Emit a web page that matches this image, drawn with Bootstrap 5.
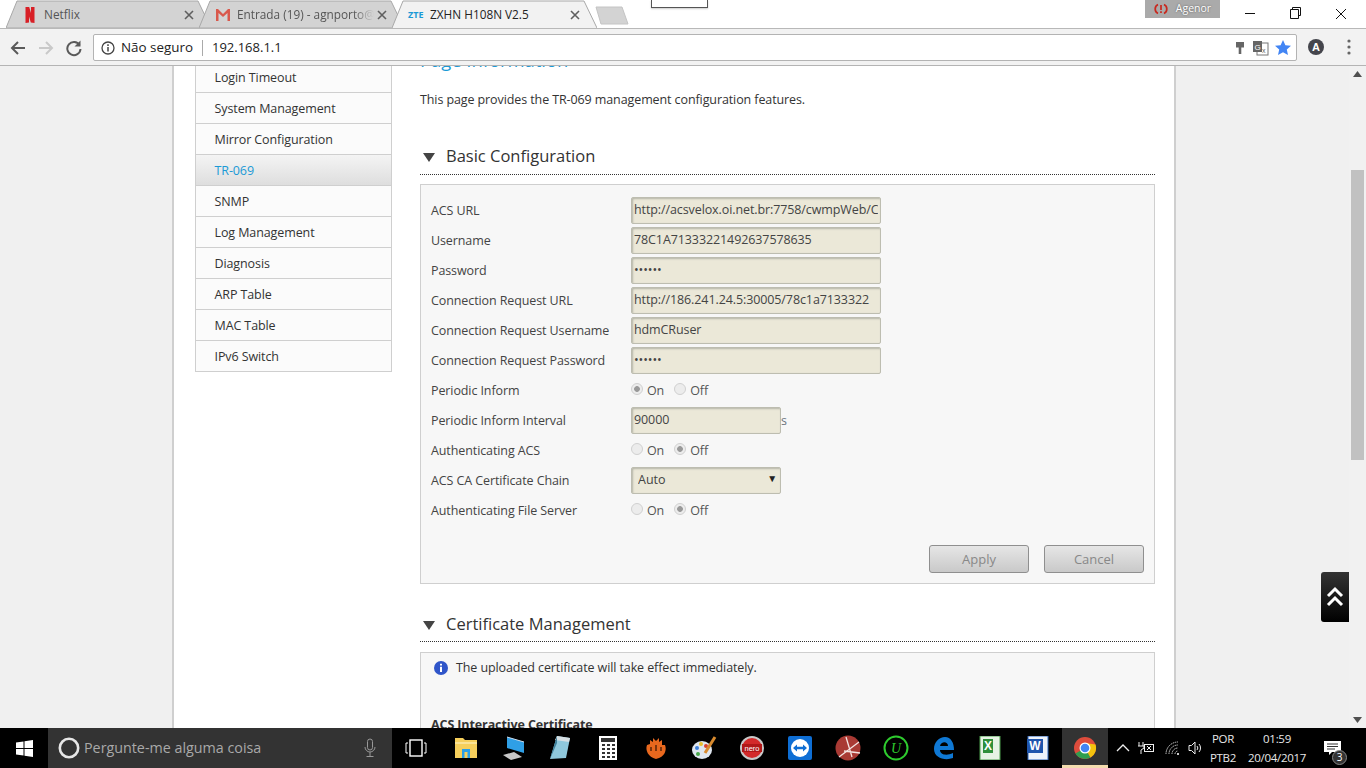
<!DOCTYPE html>
<html lang="pt">
<head>
<meta charset="utf-8">
<title>ZXHN H108N V2.5</title>
<link href="https://cdn.jsdelivr.net/npm/bootstrap@5.3.0/dist/css/bootstrap.min.css" rel="stylesheet">
<style>
html,body{height:100%;overflow:hidden}
body{width:1366px;height:768px;font-family:"Open Sans","Noto Sans",sans-serif;font-size:13px;color:#333;background:#fff;position:relative}
.tabstrip{height:28px;padding-left:6px;background:#fff;position:relative;flex:none}
.ctab{width:205px;height:28px;margin-right:-12px;position:relative;font-size:11.8px;color:#555;padding-left:16px;padding-top:1px;flex:none}
.ctab.on{color:#222;z-index:2}
.tabshape{position:absolute;left:0;top:0;z-index:0}
.ctab>*:not(.tabshape){position:relative;z-index:1}
.favslot{width:16px;height:16px;flex:none;margin-right:6px}
.tabtitle{width:137px;white-space:nowrap;overflow:hidden;flex:none}
.fade-end{-webkit-mask-image:linear-gradient(90deg,#000 85%,transparent);mask-image:linear-gradient(90deg,#000 85%,transparent)}
.tabx{margin-left:3px;flex:none}
.newtab{margin-left:10px;margin-top:6px;flex:none}
.winctl{position:absolute;right:0;top:0;height:24px}
.agenor{position:absolute;left:1145px;top:0;width:75px;height:18px;background:#aaa;color:#fff;font-size:10.5px;text-shadow:0 0 2px #555}
.topbox{position:absolute;left:651px;top:0;width:57px;height:8px;background:#fff;border:1px solid #555;border-top:0;box-shadow:0 1px 2px #ccc}
.toolbar{height:38px;background:#f2f2f2;border-top:1px solid #b8b8b8;border-bottom:1px solid #b4b4b4;flex:none;padding-left:9px}
.navbtn{width:28px;flex:none}
.addrbox{position:absolute;left:93px;top:34px;width:1204px;height:27px;background:#fff;border:1px solid #b3b3b3;border-radius:2px;font-size:13px;color:#222;padding:0 5px 0 7px}
.addrinfo{margin-right:6px;flex:none}
.addrwarn{font-size:13.4px}
.addrsep{width:1px;height:16px;background:#aaa;margin:0 9px}
.addricons{gap:6px}
.pagearea{flex:1 1 auto;min-height:0;background:#f0f0f0;overflow:hidden}
.sheet{margin-left:172px;width:1004px;height:100%;background:#fff;border-left:2px solid #cfcfcf;border-right:2px solid #cfcfcf;flex:none;overflow:hidden;font-size:12.5px;letter-spacing:-.1px}
.scrolled{margin-top:-16px;padding-left:21px}
.sidemenu{width:197px;margin-top:11px;border:1px solid #cfcfcf;flex:none;background:#fbfbfb}
.sideitem{height:31px;line-height:32px;padding-left:18.5px;border-bottom:1px solid #cfcfcf;color:#333}
.sideitem:last-child{border-bottom:0;height:30px}
.sideitem.cur{background:linear-gradient(#f4f4f4,#dedede);color:#1b9ad6}
.mainpane{width:735px;margin-left:28px;flex:none}
.pagehead{height:20px;line-height:20px;font-size:18.4px;color:#1b9ad6;margin:0;letter-spacing:0}
.pagedesc{margin:20px 0 0;line-height:20px;height:20px}
.sectitle{margin-top:29px;height:36px;border-bottom:1px dotted #333;font-size:16.5px;padding:0 0 1px 3px;color:#333;font-weight:400;letter-spacing:0}
.tri{width:0;height:0;border-left:6px solid transparent;border-right:6px solid transparent;border-top:9px solid #444;margin-right:11px;margin-top:3px}
.formbox{margin-top:9px;border:1px solid #cfcfcf;background:#f7f7f7;padding:11px 10px 10px;height:400px}
.frow{height:30px}
.flabel{width:200px;flex:none;color:#444}
.finput{width:250px;height:27px;padding:0 2px 1px;margin:-1px 0 1px;border:1px solid #bdbdb0;border-radius:2px;background:#ebe8d8;color:#444;font-size:12.5px;letter-spacing:-.1px;box-shadow:inset 1px 1px 2px #b5b5a8;font-family:inherit}
.finput:focus{background:#ebe8d8;box-shadow:inset 1px 1px 2px #b5b5a8;border-color:#bdbdb0}
.finput.short{width:150px}
.selwrap{position:relative;width:150px;margin:-1px 0 1px}
.fselect{width:150px;height:27px;padding:0 6px;border:1px solid #bdbdb0;border-radius:2px;background:#ebe8d8;color:#444;font-size:12.5px;box-shadow:inset 1px 1px 2px #b5b5a8;background-image:none}
.selarrow{position:absolute;right:4px;top:4px;font-size:10px;color:#222;pointer-events:none}
.rad{width:12px;height:12px;border-radius:50%;background:#ececec;border:1px solid #d0d0d0;display:inline-block;margin-top:-4px;margin-right:4px}
.rad.sel{background:radial-gradient(circle,#999 0 2.5px,#ececec 3.2px)}
.radopt{margin-right:10px;color:#555}
.btnrow{margin-top:19px}
.gbtn{width:100px;height:28px;padding:1px 0 0;font-size:13px;color:#888;background:linear-gradient(#e6e6e6,#c9c9c9);border:1px solid #8f8f8f;border-radius:3px;margin-left:15px}
.gbtn:disabled{color:#888;background:linear-gradient(#e6e6e6,#c9c9c9);border:1px solid #8f8f8f;opacity:1}
.sectitle.sec2{margin-top:22px;padding:1px 0 0 3px}
.notebox{margin-top:10px;border:1px solid #cfcfcf;border-bottom:0;background:#f7f7f7;padding:5px 10px 0 13px;height:120px}
.noteline{line-height:20px}
.certhd{margin-top:38px;margin-left:-3px;font-weight:700;color:#333}
.vscroll{width:17px;margin-left:auto;position:relative;background:#f1f1f1;flex:none}
.thumb{width:13px;height:290px;margin:93px 0 0 2px;background:#c1c1c1}
.sarrow{display:block;margin:5px 0 0 4px}
.sarrow.dn{position:absolute;bottom:5px;left:0;margin:0 0 0 4px}
.totop{position:absolute;left:1321px;top:572px;width:28px;height:50px;background:linear-gradient(#333,#000);border-radius:3px 0 0 3px;z-index:5}
.taskbar{height:40px;background:#000;color:#fff;flex:none;position:relative;z-index:6}
.startbtn{width:48px;flex:none}
.searchbx{width:344px;background:#333;color:#a9a9a9;font-size:14.3px;padding-left:10px;flex:none}
.tbslot{width:48px;height:40px;flex:none}
.tbslot.pull{margin-left:-2px}
.tbslot.act{width:46px;background:#333;border-bottom:3px solid #f3dcae;padding-top:3px}
.tray{font-size:12px;color:#eee;text-align:center}
.tslot{flex:none}
.tslot.wifi{margin-left:11px}
.traytxt{font-size:11.5px;letter-spacing:-.3px;line-height:19px;color:#e8e8e8;flex:none;text-align:center;white-space:nowrap}
.langbox{width:36px;margin-left:2px}
.clockbox{width:60px;margin-left:6px}
.notifybox{width:24px;height:36px;margin-left:17px;position:relative;flex:none}
.notifyicon{position:absolute;left:0;top:11px}
.notifynum{position:absolute;left:8px;top:20px;width:15px;height:15px;background:#333;border:1px solid #888;font-size:10px;color:#fff}
</style>
</head>
<body class="d-flex flex-column">

<div class="tabstrip d-flex align-items-start">
  <div class="ctab d-flex align-items-center">
    <svg class="tabshape" width="205" height="28"><path d="M0 28 L11 1 H192 L205 28Z" fill="#d3d3d3" stroke="#a8a8a8"/></svg>
    <svg class="favslot" viewBox="0 0 16 16"><path d="M3.5 0H7.2L9 6V0H12.5V16L8.8 15.4L7 9.5V15.4L3.5 16Z" fill="#d81f26"/></svg>
    <span class="tabtitle">Netflix</span>
    <svg class="tabx" width="10" height="10" viewBox="0 0 10 10"><path d="M1 1L9 9M9 1L1 9" stroke="#5f5f5f" stroke-width="1.6"/></svg>
  </div>
  <div class="ctab d-flex align-items-center">
    <svg class="tabshape" width="205" height="28"><path d="M0 28 L11 1 H192 L205 28Z" fill="#d3d3d3" stroke="#a8a8a8"/></svg>
    <svg class="favslot" viewBox="0 0 16 16"><path d="M1 2H3L8 7L13 2H15V14H12.5V6L8 10L3.5 6V14H1Z" fill="#d9584c"/></svg>
    <span class="tabtitle fade-end">Entrada (19) - agnporto@gmail</span>
    <svg class="tabx" width="10" height="10" viewBox="0 0 10 10"><path d="M1 1L9 9M9 1L1 9" stroke="#5f5f5f" stroke-width="1.6"/></svg>
  </div>
  <div class="ctab on d-flex align-items-center">
    <svg class="tabshape" width="205" height="29"><path d="M0 28 L11 1 H192 L205 28" fill="#f2f2f2" stroke="#a8a8a8"/></svg>
    <span class="favslot fw-bold d-flex align-items-center" style="color:#1b9ad6;font-size:9px">ZTE</span>
    <span class="tabtitle">ZXHN H108N V2.5</span>
    <svg class="tabx" width="10" height="10" viewBox="0 0 10 10"><path d="M1 1L9 9M9 1L1 9" stroke="#5f5f5f" stroke-width="1.6"/></svg>
  </div>
  <svg class="newtab" width="34" height="19"><path d="M1 1H27L33 18H6Z" fill="#d3d3d3" stroke="#c4c4c4"/></svg>
</div>
<div class="topbox"></div>
<div class="agenor d-flex align-items-center justify-content-center gap-2">
  <svg width="14" height="12" viewBox="0 0 14 12"><path d="M4 1.5A5 5 0 0 0 4 10.5M10 1.5A5 5 0 0 1 10 10.5" fill="none" stroke="#c8281e" stroke-width="1.7"/><path d="M7 2V7M7 8.3V10" stroke="#c8281e" stroke-width="1.7"/></svg>
  <span>Agenor</span>
</div>
<svg class="winctl" width="140" height="24" viewBox="1226 0 140 24"><path d="M1245 13.5H1255" stroke="#111"/><path d="M1290.5 11.5H1298.5V20.5H1290.5ZM1292.5 11V9.5H1300.5V17.5H1299" fill="none" stroke="#111" transform="translate(0 -2)"/><path d="M1336 9L1346 19M1346 9L1336 19" stroke="#111"/></svg>

<div class="toolbar d-flex align-items-center">
  <div class="navbtn"><svg width="18" height="16" viewBox="0 0 18 16"><path d="M16 8H3M9 2L3 8L9 14" fill="none" stroke="#5a5a5a" stroke-width="2"/></svg></div>
  <div class="navbtn"><svg width="18" height="16" viewBox="0 0 18 16"><path d="M2 8H15M9 2L15 8L9 14" fill="none" stroke="#c9c9c9" stroke-width="2"/></svg></div>
  <div class="navbtn"><svg width="18" height="18" viewBox="0 0 18 18"><path d="M14.5 6A6.6 6.6 0 1 0 15.5 10" fill="none" stroke="#5a5a5a" stroke-width="2"/><path d="M15.5 1.5V7.5H9.5Z" fill="#5a5a5a"/></svg></div>
</div>
<div class="addrbox d-flex align-items-center">
  <svg width="14" height="14" viewBox="0 0 14 14" class="addrinfo"><circle cx="7" cy="7" r="6" fill="none" stroke="#444" stroke-width="1.3"/><path d="M7 6V10.5M7 3.3V5" stroke="#444" stroke-width="1.5"/></svg>
  <span class="addrwarn">Não seguro</span><span class="addrsep"></span><span>192.168.1.1</span>
  <span class="ms-auto d-flex align-items-center addricons">
    <svg width="12" height="16" viewBox="0 0 12 16"><path d="M2 2H10V7.5H7.3V14H4.7V7.5H2Z" fill="#666"/></svg>
    <svg width="17" height="16" viewBox="0 0 17 16"><rect x="5" y="3" width="11" height="12" fill="#fff" stroke="#777"/><rect x="1" y="1" width="9" height="11" fill="#666"/><text x="2.5" y="9.5" font-size="8" fill="#fff" font-family="Liberation Sans">G</text><text x="10" y="13" font-size="7" fill="#666" font-family="Liberation Sans">x</text></svg>
    <svg width="16" height="15" viewBox="0 0 16 15"><path d="M8 0L10.4 5.2L16 5.8L11.8 9.5L13 15L8 12.2L3 15L4.2 9.5L0 5.8L5.6 5.2Z" fill="#4285f4"/></svg>
  </span>
</div>
<svg class="position-absolute" style="left:1306px;top:37px" width="50" height="20" viewBox="0 0 50 20"><circle cx="10" cy="10" r="8" fill="#44454c"/><text x="10" y="14" font-size="11" font-weight="700" text-anchor="middle" fill="#fff" font-family="Liberation Sans">A</text><circle cx="43" cy="4" r="1.6" fill="#666"/><circle cx="43" cy="10" r="1.6" fill="#666"/><circle cx="43" cy="16" r="1.6" fill="#666"/></svg>

<div class="pagearea d-flex">
  <div class="sheet">
    <div class="scrolled d-flex align-items-start">
      <div class="sidemenu">
        <div class="sideitem">Login Timeout</div>
        <div class="sideitem">System Management</div>
        <div class="sideitem">Mirror Configuration</div>
        <div class="sideitem cur">TR-069</div>
        <div class="sideitem">SNMP</div>
        <div class="sideitem">Log Management</div>
        <div class="sideitem">Diagnosis</div>
        <div class="sideitem">ARP Table</div>
        <div class="sideitem">MAC Table</div>
        <div class="sideitem">IPv6 Switch</div>
      </div>
      <div class="mainpane">
        <h1 class="pagehead">Page Information</h1>
        <p class="pagedesc">This page provides the TR-069 management configuration features.</p>
        <div class="sectitle d-flex align-items-center"><span class="tri"></span>Basic Configuration</div>
        <form class="formbox">
          <div class="frow d-flex align-items-center"><label class="flabel">ACS URL</label><input class="form-control finput" value="http://acsvelox.oi.net.br:7758/cwmpWeb/CPEMgt"></div>
          <div class="frow d-flex align-items-center"><label class="flabel">Username</label><input class="form-control finput" value="78C1A71333221492637578635"></div>
          <div class="frow d-flex align-items-center"><label class="flabel">Password</label><input class="form-control finput" type="password" value="xxxxxx"></div>
          <div class="frow d-flex align-items-center"><label class="flabel">Connection Request URL</label><input class="form-control finput" value="http://186.241.24.5:30005/78c1a7133322"></div>
          <div class="frow d-flex align-items-center"><label class="flabel">Connection Request Username</label><input class="form-control finput" value="hdmCRuser"></div>
          <div class="frow d-flex align-items-center"><label class="flabel">Connection Request Password</label><input class="form-control finput" type="password" value="xxxxxx"></div>
          <div class="frow d-flex align-items-center"><span class="flabel">Periodic Inform</span><span class="radopt d-flex align-items-center"><span class="rad sel"></span>On</span><span class="radopt d-flex align-items-center"><span class="rad"></span>Off</span></div>
          <div class="frow d-flex align-items-center"><label class="flabel">Periodic Inform Interval</label><input class="form-control finput short" value="90000"><span class="text-secondary">s</span></div>
          <div class="frow d-flex align-items-center"><span class="flabel">Authenticating ACS</span><span class="radopt d-flex align-items-center"><span class="rad"></span>On</span><span class="radopt d-flex align-items-center"><span class="rad sel"></span>Off</span></div>
          <div class="frow d-flex align-items-center"><label class="flabel">ACS CA Certificate Chain</label><span class="selwrap"><select class="form-select fselect"><option>Auto</option></select><span class="selarrow">▼</span></span></div>
          <div class="frow d-flex align-items-center"><span class="flabel">Authenticating File Server</span><span class="radopt d-flex align-items-center"><span class="rad"></span>On</span><span class="radopt d-flex align-items-center"><span class="rad sel"></span>Off</span></div>
          <div class="btnrow d-flex justify-content-end"><button type="button" class="btn gbtn" disabled>Apply</button><button type="button" class="btn gbtn" disabled>Cancel</button></div>
        </form>
        <div class="sectitle sec2 d-flex align-items-center"><span class="tri"></span>Certificate Management</div>
        <div class="notebox">
          <div class="noteline d-flex align-items-center gap-2"><svg width="14" height="14" viewBox="0 0 14 14"><circle cx="7" cy="7" r="7" fill="#2f55c9"/><path d="M7 5.8V11M7 2.8V4.5" stroke="#fff" stroke-width="2"/></svg><span>The uploaded certificate will take effect immediately.</span></div>
          <div class="certhd">ACS Interactive Certificate</div>
        </div>
      </div>
    </div>
  </div>
  <div class="vscroll">
    <svg class="sarrow" width="9" height="6" viewBox="0 0 9 6"><path d="M4.5 0L9 6H0Z" fill="#505050"/></svg>
    <div class="thumb"></div>
    <svg class="sarrow dn" width="9" height="6" viewBox="0 0 9 6"><path d="M0 0H9L4.5 6Z" fill="#505050"/></svg>
  </div>
</div>

<div class="totop d-flex align-items-center justify-content-center">
  <svg width="18" height="22" viewBox="0 0 18 22"><path d="M2 10L9 3L16 10M2 19L9 12L16 19" fill="none" stroke="#fff" stroke-width="3"/></svg>
</div>

<div class="taskbar d-flex align-items-stretch">
  <div class="startbtn d-flex align-items-center justify-content-center">
    <svg width="17" height="17" viewBox="0 0 17 17"><path d="M0 2.5L7.5 1.4V8H0ZM8.5 1.2L17 0V8H8.5ZM0 9H7.5V15.6L0 14.5ZM8.5 9H17V17L8.5 15.8Z" fill="#fff"/></svg>
  </div>
  <div class="searchbx d-flex align-items-center">
    <svg width="22" height="22" viewBox="0 0 22 22" class="me-1"><circle cx="11" cy="11" r="9.2" fill="none" stroke="#e6e6e6" stroke-width="2.6"/></svg>
    <span>Pergunte-me alguma coisa</span>
    <svg class="ms-auto me-3" width="12" height="20" viewBox="0 0 12 20"><rect x="3.5" y="1" width="5" height="11" rx="2.5" fill="none" stroke="#999"/><path d="M1 9A5 5 0 0 0 11 9M6 14V18M2.5 18.5H9.5" fill="none" stroke="#999"/></svg>
  </div>
  <div class="tbslot d-flex align-items-center justify-content-center"><svg width="22" height="18" viewBox="0 0 22 18"><rect x="5" y="1" width="12" height="16" fill="none" stroke="#fff" stroke-width="1.4"/><path d="M3 4H1V14H3M19 4H21V14H19" fill="none" stroke="#fff"/></svg></div>
  <div class="tbslot d-flex align-items-center justify-content-center ps-1"><svg width="24" height="22" viewBox="0 0 24 22"><path d="M1 1H9L11 3H23V21H1Z" fill="#f6cf5c"/><path d="M1 6H23" stroke="#fdeaa8" stroke-width="1.5"/><rect x="8" y="12" width="8" height="9" fill="#2a9fe8"/><rect x="10.5" y="15" width="3" height="6" fill="#f6cf5c"/></svg></div>
  <div class="tbslot d-flex align-items-center justify-content-center ps-1"><svg width="24" height="24" viewBox="0 0 24 24"><path d="M5 1L22 6V17L5 12Z" fill="#2f9fe6"/><path d="M5 1L22 6" stroke="#cde" stroke-width="1"/><path d="M1 19L12 16L20 21L9 24Z" fill="#c8c8c8"/></svg></div>
  <div class="tbslot d-flex align-items-center justify-content-center"><svg width="22" height="26" viewBox="0 0 22 26"><path d="M8 1L21 3L17 23L1 24Z" fill="#8fc8dc"/><path d="M8 1L21 3L20 7L6 5Z" fill="#d6dfe3"/><path d="M1 24L8 8V1L1 24Z" fill="#3d7f9a"/></svg></div>
  <div class="tbslot d-flex align-items-center justify-content-center"><svg width="18" height="24" viewBox="0 0 18 24"><rect width="18" height="24" fill="#fff"/><rect x="2" y="2" width="14" height="4" fill="#333"/><path d="M3 9H6M8 9H11M13 9H16M3 13H6M8 13H11M13 13H16M3 17H6M8 17H11M13 17H16M3 21H6M8 21H11M13 21H16" stroke="#333" stroke-width="2"/></svg></div>
  <div class="tbslot d-flex align-items-center justify-content-center"><svg width="22" height="24" viewBox="0 0 22 24"><path d="M2 9L5 8V4L8 6V2L11 5L14 2V6L17 4V9L20 9C22 14 20 21 11 23C3 21 0 14 2 9Z" fill="#e8681e"/><path d="M6 11V15M11 9V15M16 11V15" stroke="#5a2408" stroke-width="1.5"/></svg></div>
  <div class="tbslot d-flex align-items-center justify-content-center"><svg width="26" height="26" viewBox="0 0 26 26"><ellipse cx="11" cy="15" rx="10" ry="9" fill="#dfe6ef"/><circle cx="6" cy="13" r="2" fill="#3d7fd8"/><circle cx="10" cy="9" r="2" fill="#e8c02e"/><circle cx="15" cy="11" r="2" fill="#d8402e"/><circle cx="7" cy="19" r="2" fill="#49a84a"/><path d="M14 18L24 2" stroke="#d88a2e" stroke-width="3"/></svg></div>
  <div class="tbslot d-flex align-items-center justify-content-center"><svg width="26" height="26" viewBox="0 0 26 26"><circle cx="13" cy="13" r="12" fill="#c9c9c9"/><circle cx="13" cy="13" r="10" fill="#d32a2a"/><rect x="3" y="9" width="20" height="8" fill="#b01818"/><text x="13" y="16" font-size="7.5" fill="#fff" text-anchor="middle" font-family="Liberation Sans">nero</text></svg></div>
  <div class="tbslot d-flex align-items-center justify-content-center"><svg width="24" height="24" viewBox="0 0 24 24"><rect width="24" height="24" rx="2" fill="#0e6ed4"/><circle cx="12" cy="12" r="9" fill="#fff"/><path d="M5 12L9 8.5V10.7H15V8.5L19 12L15 15.5V13.3H9V15.5Z" fill="#0e6ed4"/></svg></div>
  <div class="tbslot d-flex align-items-center justify-content-center"><svg width="26" height="26" viewBox="0 0 26 26"><circle cx="13" cy="13" r="12.5" fill="#a93a34"/><path d="M4 22L24 7M11 2L17 22M9 16L25 18" stroke="#f4e4e2" stroke-width="1.3" fill="none"/></svg></div>
  <div class="tbslot d-flex align-items-center justify-content-center"><svg width="26" height="26" viewBox="0 0 26 26"><circle cx="13" cy="13" r="11.5" fill="none" stroke="#2ecb2e" stroke-width="2"/><text x="13" y="18" font-size="14" font-style="italic" fill="#2ecb2e" text-anchor="middle" font-family="Liberation Serif">U</text></svg></div>
  <div class="tbslot d-flex align-items-center justify-content-center"><svg width="22" height="24" viewBox="0 0 22 24"><path d="M1 13C1 6 6 1 12 1C18 1 21 7 21 14H7C7 19 14 20 20 17V22C12 25 1 22 1 13ZM7 10H15C15 5 8 5 7 10Z" fill="#0f78d4"/></svg></div>
  <div class="tbslot pull d-flex align-items-center justify-content-center"><svg width="24" height="24" viewBox="0 0 24 24"><rect x="2" width="20" height="24" fill="#e6f3e4" stroke="#4a9b4a"/><rect x="5" y="3" width="10" height="14" fill="#2f8f3a"/><text x="10" y="14" font-size="12" font-weight="700" fill="#fff" text-anchor="middle" font-family="Liberation Sans">X</text></svg></div>
  <div class="tbslot d-flex align-items-center justify-content-center"><svg width="24" height="24" viewBox="0 0 24 24"><rect x="2" width="20" height="24" fill="#eef3fb" stroke="#2a62b8"/><rect x="1" y="3" width="16" height="14" fill="#1f55ad"/><text x="9" y="14" font-size="12" font-weight="700" fill="#fff" text-anchor="middle" font-family="Liberation Sans">W</text></svg></div>
  <div class="tbslot act d-flex align-items-center justify-content-center"><svg width="24" height="24" viewBox="0 0 24 24"><circle cx="12" cy="12" r="11" fill="#de4c3c"/><path d="M12 12L2.5 17.5A11 11 0 0 0 17.5 21.5Z" fill="#2f9e4f"/><path d="M12 12L17.5 21.5A11 11 0 0 0 22.5 8.5L12 7Z" fill="#f4c20d"/><circle cx="12" cy="12" r="5.5" fill="#fff"/><circle cx="12" cy="12" r="4.3" fill="#4285f4"/></svg></div>
  <div class="d-flex align-items-center tray flex-grow-1">
    <svg class="tslot ms-2" width="14" height="10" viewBox="0 0 14 10"><path d="M1 8L7 2L13 8" fill="none" stroke="#eee" stroke-width="1.3"/></svg>
    <svg class="tslot ms-2" width="16" height="14" viewBox="0 0 16 14"><path d="M1 1V5M5 1V5M0 5H6V7L3 9V13" fill="none" stroke="#eee"/><rect x="6.5" y="3.5" width="9" height="7" fill="none" stroke="#eee"/><path d="M9 5L13 9M13 5L9 9" stroke="#eee"/></svg>
    <svg class="tslot wifi" width="15" height="14" viewBox="0 0 15 14"><path d="M1 13A12 12 0 0 1 13 1M4 13A9 9 0 0 1 13 4M7 13A6 6 0 0 1 13 7M10 13A3 3 0 0 1 13 10" fill="none" stroke="#ccc" stroke-dasharray="1.5 .7"/><rect x="12" y="12" width="2" height="2" fill="#ccc"/></svg>
    <svg class="tslot ms-2" width="15" height="14" viewBox="0 0 15 14"><path d="M1 4.5H3.5L7 1V13L3.5 9.5H1Z" fill="none" stroke="#eee"/><path d="M9 5A3 3 0 0 1 9 9M11 3A6 6 0 0 1 11 11" fill="none" stroke="#eee"/></svg>
    <div class="traytxt langbox">POR<br>PTB2</div>
    <div class="traytxt clockbox">01:59<br>20/04/2017</div>
    <div class="notifybox">
      <svg class="notifyicon" width="17" height="14" viewBox="0 0 17 14"><path d="M0 0H17V11H8L5 14V11H0Z" fill="#fff"/><path d="M3 3H14M3 5.5H14M3 8H11" stroke="#333"/></svg>
      <span class="notifynum rounded-circle d-flex align-items-center justify-content-center">3</span>
    </div>
  </div>
</div>
</body>
</html>
